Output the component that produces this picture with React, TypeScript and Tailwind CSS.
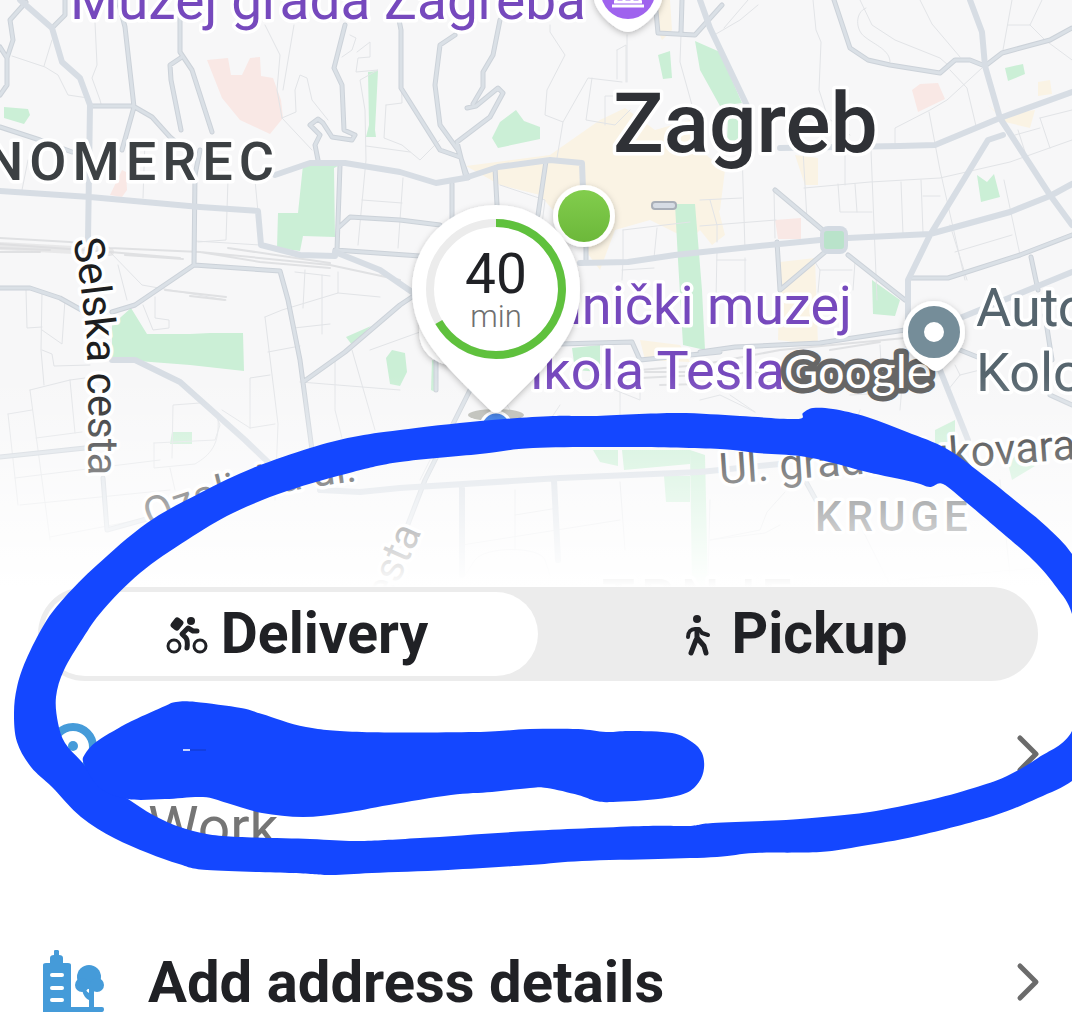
import { useState } from 'react'
import type { ReactNode } from 'react'
import clsx from 'clsx'

type Mode = 'delivery' | 'pickup'

type Point = [number, number]

// closed smooth outline through a list of points
const smoothOutline = (points: Point[]) => {
  const n = points.length
  const at = (i: number) => points[(i + n) % n]
  let d = `M${points[0][0]} ${points[0][1]}`

  for (let i = 0; i < n; i++) {
    const [p0, p1, p2, p3] = [at(i - 1), at(i), at(i + 1), at(i + 2)]
    const c1 = [p1[0] + (p2[0] - p0[0]) / 6, p1[1] + (p2[1] - p0[1]) / 6]
    const c2 = [p2[0] - (p3[0] - p1[0]) / 6, p2[1] - (p3[1] - p1[1]) / 6]
    d += `C${c1[0]} ${c1[1]} ${c2[0]} ${c2[1]} ${p2[0]} ${p2[1]}`
  }
  return `${d}Z`
}

const LOOP_OUTER: Point[] = [
  [14, 713], [17, 687], [26, 660], [45, 623], [65, 597], [97, 565], [147, 523], [200, 493],
  [253, 468], [310, 448], [353, 437], [400, 430], [480, 421], [553, 416], [593, 416], [677, 413],
  [740, 416], [797, 419], [803, 413], [813, 408], [833, 409], [867, 417], [907, 432], [947, 449],
  [987, 478], [1017, 502], [1047, 527], [1072, 554], [1098, 600], [1110, 680], [1096, 756],
  [1072, 781], [1038, 798], [993, 816], [917, 836], [862, 846], [820, 852], [755, 853],
  [717, 857], [658, 859], [582, 861], [530, 865], [448, 870], [372, 873], [331, 875], [293, 873],
  [207, 870], [179, 864], [148, 853], [114, 838], [81, 817], [52, 787], [31, 767], [17, 742],
]

const LOOP_INNER: Point[] = [
  [56, 697], [64, 670], [83, 638], [103, 610], [140, 573], [187, 540], [233, 513], [287, 491],
  [353, 472], [400, 462], [480, 454], [533, 448], [627, 447], [720, 449], [757, 453], [800, 456],
  [833, 463], [867, 472], [913, 482], [930, 487], [943, 484], [967, 503], [993, 525], [1033, 560],
  [1057, 588], [1072, 614], [1082, 670], [1072, 731], [1038, 758], [1007, 776], [983, 785],
  [938, 798], [876, 811], [834, 816], [786, 820], [713, 823], [689, 826], [644, 826], [530, 831],
  [420, 838], [358, 841], [310, 839], [223, 836], [183, 828], [153, 815], [128, 799], [100, 782],
  [81, 761], [65, 743], [58, 723],
]

const BLOB: Point[] = [
  [84, 764], [85, 754], [96, 742], [117, 729], [134, 720], [165, 706], [176, 702], [196, 702],
  [241, 708], [262, 714], [306, 727], [362, 732], [475, 732], [530, 729], [578, 729], [606, 732],
  [630, 731], [672, 733], [692, 742], [702, 753], [704, 768], [699, 782], [686, 793], [658, 799],
  [613, 802], [596, 801], [578, 795], [547, 788], [530, 788], [492, 792], [451, 795], [389, 805],
  [344, 813], [303, 817], [262, 813], [227, 803], [203, 797], [165, 799], [128, 799], [100, 788],
]

const WIDE_ROADS = [
  'M20 0L52 28L62 62L80 78L90 105L88 240',
  'M0 191L90 197L200 207L258 211L261 245L300 255L335 256',
  'M275 175L310 163L345 163L400 172L436 183L465 178L498 167L550 160L582 163L583 190',
  'M580 263L628 262L675 255L750 247L820 240',
  'M848 238L930 234L1010 212L1050 196L1072 184',
  'M908 320V280L930 235L988 140L1003 135',
  'M970 0L982 32L985 66L1000 118L1050 195L1072 225',
  'M780 148L900 146L935 145L1000 118L1072 92',
  'M700 0L710 28L750 112',
  'M335 252L380 270L412 292',
  'M940 370L968 440',
  'M112 360L135 360L180 382L245 440L272 466',
  'M960 318L1072 272',
  'M320 490L360 492L400 488L560 478L700 472L780 464',
  'M462 488V575',
  'M554 480L558 560',
]

const ROADS = [
  'M0 95L7 85V58L0 47',
  'M26 2L10 20L13 40L7 58',
  'M65 0V15L52 28',
  'M118 0L125 27L134 107L122 150',
  'M90 106H133L152 117L170 137L188 152',
  'M180 0V52L192 70L212 132',
  'M182 57L170 65L171 80L181 130',
  'M0 127L40 140L72 152',
  'M200 150L195 175L194 265L280 271L288 300L300 360L312 450',
  'M194 265L135 305L112 312',
  'M0 288H30L60 298L85 312',
  'M318 160L315 145L320 135L310 125L318 119L323 123L332 137L352 140L355 135L344 130L342 85L334 68L345 25',
  'M340 165L337 250',
  'M338 228L350 217L400 220L440 225',
  'M335 250L420 256',
  'M395 0L401 30V88L440 150L460 157',
  'M455 35L440 45L435 85L440 125L458 150L468 178',
  'M500 20L493 55L483 72V87L473 104',
  'M467 108L476 106L498 88L503 93L490 117L457 142L466 178',
  'M452 184V225',
  'M495 168L497 205',
  'M546 161L538 215',
  'M655 0L658 33L695 35L722 5',
  'M682 0L681 33',
  'M586 245V262',
  'M834 0L850 48L868 60L890 65L940 73L955 60L970 60L985 66L1002 53L1050 40L1072 28',
  'M777 242L780 290',
  'M775 190L825 232',
  'M848 255L905 300',
  'M825 252L780 290',
  'M910 278H948L1020 255L1072 235',
  'M1031 257L1038 290',
  'M700 352L735 347L820 343L905 330',
  'M1045 315L1052 360',
  'M1050 395L1072 405',
  'M0 457L85 448',
  'M103 478L107 530L150 518',
  'M303 382L345 352L400 305L430 285',
  'M436 360V390',
  'M470 390L425 480L400 545',
  'M560 344L632 342L640 360L720 352',
  'M960 350L985 360',
  'M805 480L816 500',
]

const LANES = [
  'M95 22L97 65L92 78L100 100L101 104',
  'M52 40L44 66',
  'M12 56L45 67L58 75L68 95L88 98',
  'M28 160L22 190',
  'M265 25L280 55L277 90L282 118L312 150',
  'M294 25L283 90',
  'M282 118L296 112L295 90L300 75L307 78L312 100L328 120',
  'M145 140L143 198',
  'M228 180L226 240L198 242',
  'M255 180L258 212',
  'M350 35L356 38L352 50L342 57',
  'M357 52L370 42V57L358 58L356 72L378 70L360 80L365 110L366 160L358 245',
  'M386 105L402 103L400 22',
  'M386 105L384 138L402 145L420 160L440 140',
  'M366 146L410 152',
  'M403 178L398 248',
  'M362 200L402 203',
  'M500 185L545 200L540 240',
  'M550 25V32L565 55L547 90L545 115L563 122L588 78L622 82',
  'M563 122L557 158',
  'M617 50L626 45V82M627 35V82M617 50V79',
  'M592 78L586 120L615 125L630 110M605 125V96H622',
  'M681 35L680 62L692 105',
  'M724 28L748 0M716 34L740 20L758 5',
  'M813 0L816 30L821 42L819 90L828 118L850 135',
  'M860 0L872 25L895 40L940 58L948 65',
  'M866 8C855 12 855 30 865 37C875 45 890 50 890 62',
  'M920 0L932 24L960 57',
  'M1012 0L1003 50M1008 25H1030L1042 0M1030 25L1045 40L1072 60',
  'M895 145V128L930 110L947 100L982 68',
  'M950 70L967 88L976 126M929 112L940 170L965 280',
  'M804 188L870 182L940 178L1010 162L1072 140',
  'M803 150L807 220M845 150V185M871 150L877 300',
  'M838 184L840 212H872M855 184L857 212M901 182L903 234M921 180L923 232M923 196H940',
  'M774 190L775 238M742 150L745 250M700 200L742 198M700 226L776 220',
  'M717 250L716 300M745 258V292M717 260H746',
  'M1018 130L1025 152M1015 135L1040 128M1040 118L1050 148M1040 118L1072 110',
  'M1004 180L1020 255M955 252L1012 235M950 225L967 280',
  'M820 270H852M815 262L820 270L818 292M855 262L853 290',
  'M623 230V260L622 280M623 230L690 222M657 228L654 258M622 270L654 268',
  'M710 200L717 225V242',
  'M195 241L260 245M26 290L27 328L42 327M42 292L41 350L44 385M65 300L62 344L42 330',
  'M42 350L52 354L54 366L90 365M118 265L127 300M155 297L155 318L169 320V328L153 330L143 305',
  'M108 250L142 285L170 290L226 300',
  'M30 390L70 380L85 378M30 390L42 480L50 540M8 414L32 410M8 414L18 505M70 380L75 433M36 438L82 432',
  'M172 458L173 405L200 403M154 443L215 440L220 425L217 418M154 443V468L195 464C210 455 220 445 218 418',
  'M265 317L282 310L338 293V272M265 317L278 424L275 500M268 352L300 346M250 428V378L270 375',
  'M305 270L303 308M322 275V334M294 328L330 324M295 272L330 276M338 293L380 297',
  'M300 382L400 390M335 360V410L342 438M352 350L375 430M250 428L275 424M222 410L250 428',
  'M420 332L370 350M15 478L160 460M20 505L170 490M50 537L180 512M170 468L175 490',
  'M500 392L510 410M590 380L640 400L640 392M560 405L550 420M620 392V420',
  'M700 400L720 395L755 412M730 395L755 412M880 345L882 380',
  'M948 390L960 375L1000 365M960 375L955 365M905 350L900 410M850 395L905 392',
  'M710 540L765 533L780 525M710 500L708 580M710 540L760 530L767 512L785 492',
  'M430 460L420 480M515 490V550M515 515L558 508M462 545L620 520M620 482L625 550',
  'M1000 480L1010 575M850 440L860 410M900 580L1072 565M855 515L890 585',
  'M465 575L475 560C485 546 540 546 545 560L550 575',
]

const RAILS = [
  'M0 238L70 242L110 248L200 252L330 265L400 280',
  'M0 244L110 252L180 258M0 248L50 250M0 252L40 252',
  'M200 252L260 262L330 268M228 248L330 263',
  'M125 255L183 259M165 290L226 297M190 296L225 300',
  'M640 370L700 365L780 350L905 338',
  'M640 378L760 372L800 360M660 385L780 382',
  'M645 372L690 372M830 350L880 342',
]

const PARKS = [
  'M4 107L28 109L30 115L24 124L4 118Z',
  'M368 72L378 71L375 130L376 137H366L369 125Z',
  'M303 165L342 164L334 168L335 237L303 236L300 251L277 248L278 213L298 213Z',
  'M516 110L524 121L540 127V139L498 148L492 138L500 122Z',
  'M695 41L720 52L742 103L720 106L700 70Z',
  'M658 55L670 51L672 78L663 79Z',
  'M728 118L740 118L738 142L727 140Z',
  'M675 204H695L702 290L705 350L683 345L678 260Z',
  'M872 280L900 300L895 316L873 314Z',
  'M977 175L987 182L994 174L1000 197L981 202Z',
  'M1005 68L1023 64L1025 74L1008 81Z',
  'M131 308L147 334H190L210 333H243L244 371L190 365L112 359V325Z',
  'M346 337L371 326L352 345Z',
  'M172 432H192V444H170Z',
  'M386 358L392 350L405 353L407 372L400 386L390 384Z',
  'M572 348L600 345V372L575 370Z',
  'M593 450H618V466L600 462Z',
  'M622 450H690V464L624 470Z',
  'M664 476H690V502H666Z',
  'M935 430L955 420V440L935 445Z',
  'M1008 464L1016 455L1035 466L1012 480Z',
  'M690 450L705 455L708 590H692Z',
  'M432 360L438 362L435 392L431 390Z',
]

const BUILT_UP = [
  'M466 166L550 155L600 120L625 108L655 130L690 120L700 150L725 170L720 210L690 240L650 220L615 230L600 270L570 230L540 195L500 185Z',
  'M653 0H670L672 30L662 40L655 25Z',
  'M795 155L818 158V185H805Z',
  'M700 190L715 195L725 235L712 245L700 230Z',
  'M780 262L815 258L818 345L778 340Z',
  'M988 105L1000 115L1035 110L1030 128L1005 122Z',
  'M1038 82L1050 80L1052 94L1038 96Z',
  'M640 340L680 345L690 362L645 360Z',
]

const HOSPITALS = [
  'M207 60L228 58L231 75H242L250 58L260 57L261 76L273 78L281 100L283 118L270 134L240 120L222 98Z',
  'M122 170L126 172L127 190L122 197L110 195Z',
  'M912 90L920 84L938 83L945 99L918 112Z',
  'M775 220L801 218V239L778 239Z',
]

const HALO = {
  stroke: '#ffffff',
  strokeWidth: 7,
  strokeLinejoin: 'round',
  paintOrder: 'stroke',
} as const

function CityMap() {
  return (
    <svg
      viewBox="0 0 1072 587"
      preserveAspectRatio="xMidYMin slice"
      className="block h-[587px] w-full font-[Roboto,sans-serif]"
      role="img"
      aria-label="Map of Zagreb"
    >
      <defs>
        <linearGradient id="fade" x1="0" y1="375" x2="0" y2="587" gradientUnits="userSpaceOnUse">
          <stop offset="0" stopColor="#fff" stopOpacity="0" />
          <stop offset="1" stopColor="#fff" stopOpacity="1" />
        </linearGradient>
        <linearGradient id="dot" x1="0" y1="0" x2="0" y2="1">
          <stop offset="0" stopColor="#82cd4d" />
          <stop offset="1" stopColor="#6cb83a" />
        </linearGradient>
        <filter id="shadow" x="-30%" y="-30%" width="160%" height="160%">
          <feDropShadow dx="0" dy="2" stdDeviation="3" floodOpacity="0.25" />
        </filter>
        <path id="selska" d="M73 240L80 280L87 340L88 400L88 500" />
        <path id="ozaljska" d="M151 530C194 508 274 490 384 478" />
      </defs>

      <rect width="1072" height="587" fill="#f7f7f8" />

      <path d={BUILT_UP.join('')} fill="#faf3e4" />
      <path d={HOSPITALS.join('')} fill="#f9e8e5" />
      <path d={PARKS.join('')} fill="#cbefd6" />

      <g fill="none" strokeLinejoin="round" strokeLinecap="round">
        <path d={LANES.join('')} stroke="#e2e4e7" strokeWidth="1" />
        <path d={RAILS.join('')} stroke="#e0e1e3" strokeWidth="2" />
        <path d="M0 246L110 252" stroke="#dddee0" strokeWidth="8" opacity="0.6" />
        <path d={ROADS.join('')} stroke="#ccd2d9" strokeWidth="5" />
        <path d={ROADS.join('')} stroke="#dae0e6" strokeWidth="3" />
        <path d={WIDE_ROADS.join('')} stroke="#d7dde4" strokeWidth="6" />
      </g>
      <rect x="820" y="226" width="28" height="28" rx="8" fill="#d3dae2" />
      <rect x="824" y="231" width="20" height="18" rx="3" fill="#b9e3ca" />
      <rect x="652" y="202" width="24" height="7" rx="3" fill="#d6dce4" stroke="#a9afb8" strokeWidth="2" />

      <g {...HALO}>
        <text x="613" y="152" fontSize="84" fontWeight="500" fill="#2f3136">Zagreb</text>
        <text x="-15" y="180" fontSize="54" fontWeight="500" fill="#3c4043" className="tracking-[6px]">
          NOMEREC
        </text>
        <g fontSize="54" fill="#7649bd">
          <text x="70" y="19" fontSize="55">Muzej grada Zagreba</text>
          <text x="852" y="324" textAnchor="end">hnički muzej</text>
          <text x="785" y="389" textAnchor="end">ikola Tesla</text>
        </g>
        <g fontSize="54" fill="#56656e">
          <text x="976" y="326">Autobusni</text>
          <text x="976" y="391">Kolodvor</text>
        </g>
        <g fontSize="42" fill="#1d1e20">
          <text>
            <textPath href="#selska">Selska cesta</textPath>
          </text>
          <text>
            <textPath href="#ozaljska">Ozaljska ul.</textPath>
          </text>
          <text transform="translate(720 484) rotate(-4)" fontSize="43">Ul. grada Vukovara</text>
          <text transform="translate(380 625) rotate(-66)">cesta</text>
        </g>
        <g fontWeight="500" fill="#3c4043">
          <text x="815" y="531" fontSize="42" className="tracking-[5px]">KRUGE</text>
          <text x="602" y="617" fontSize="54" className="tracking-[6px]">TRNJE</text>
        </g>
      </g>

      <rect y="375" width="1072" height="212" fill="url(#fade)" />

      <text
        x="784"
        y="388"
        fontSize="47"
        fill="#ffffff"
        stroke="#666666"
        strokeWidth="11"
        strokeLinejoin="round"
        paintOrder="stroke"
        className="font-[Lato,sans-serif]"
      >
        Google
      </text>

      {/* museum */}
      <g>
        <path
          d="M628 -42A34 34 0 0 1 660 6C655 17 638 32 628 32C618 32 601 17 596 6A34 34 0 0 1 628 -42Z"
          fill="#fff"
          filter="url(#shadow)"
        />
        <circle cx="628" cy="-8" r="27" fill="#9f63ee" />
        <path d="M612 6H644M616 2V-8M624 2V-8M632 2V-8M640 2V-8M614 2H642" stroke="#fff" strokeWidth="3" />
      </g>

      {/* bus station */}
      <g>
        <path
          d="M934 301A31 31 0 0 1 965 333C965 346 955 357 945 366Q936 376 927 366C914 358 903 348 903 333A31 31 0 0 1 934 301Z"
          fill="#fff"
          filter="url(#shadow)"
        />
        <circle cx="934" cy="332" r="18" fill="none" stroke="#758d99" strokeWidth="16" />
      </g>

      {/* restaurant */}
      <circle cx="584" cy="216" r="31" fill="#fff" filter="url(#shadow)" />
      <circle cx="584" cy="216" r="26" fill="url(#dot)" />

      {/* courier estimate */}
      <ellipse cx="496" cy="415" rx="28" ry="6" fill="#c4c5bf" />
      <circle cx="496" cy="427" r="15" fill="#4a86e8" stroke="#fff" strokeWidth="3" />
      <circle cx="452" cy="332" r="33" fill="#fff" filter="url(#shadow)" />
      <path
        d="M496 205A84 84 0 0 1 580 289C580 335 552 360 504 408Q496 417 488 408C440 360 412 335 412 289A84 84 0 0 1 496 205Z"
        fill="#fff"
        filter="url(#shadow)"
      />
      <circle cx="496" cy="289" r="66" fill="none" stroke="#ececec" strokeWidth="8" />
      <path d="M496 223A66 66 0 1 1 438.8 322" fill="none" stroke="#5fc13d" strokeWidth="8" />
      <text x="496" y="293" textAnchor="middle" fontSize="55" fill="#202125">40</text>
      <text x="496" y="327" textAnchor="middle" fontSize="31" fontWeight="300" fill="#6f6f6f">min</text>
    </svg>
  )
}

function BikeIcon() {
  return (
    <svg viewBox="0 0 60 60" className="size-[60px]" fill="none" stroke="currentColor" aria-hidden="true">
      <circle cx="17" cy="42" r="6" strokeWidth="3" />
      <circle cx="43" cy="42" r="6" strokeWidth="3" />
      <circle cx="34" cy="17" r="4" fill="currentColor" stroke="none" />
      <rect x="15" y="14" width="10" height="12" rx="3" transform="rotate(38 20 20)" fill="currentColor" stroke="none" />
      <path d="M40 27H36L31 24L25 30L29 34Q31 37 30 44" strokeWidth="5" strokeLinecap="round" strokeLinejoin="round" />
    </svg>
  )
}

function WalkIcon() {
  return (
    <svg viewBox="0 0 60 60" className="size-[60px]" fill="none" stroke="currentColor" aria-hidden="true">
      <circle cx="29" cy="15" r="4" fill="currentColor" stroke="none" />
      <g strokeWidth="5" strokeLinecap="round" strokeLinejoin="round">
        <path d="M20 33C20 28 23 25 27 25H31L34 29L40 31" strokeWidth="4" />
        <path d="M29 26V36" />
        <path d="M28 36L23 49M30 35L36 42L38 49" />
      </g>
    </svg>
  )
}

function PlaceIcon() {
  return (
    <svg viewBox="0 0 64 64" className="size-16 text-[#459bd9]" aria-hidden="true">
      <path
        d="M31 5A20 20 0 0 1 51 25C51 38 38 50 31 58C24 50 11 38 11 25A20 20 0 0 1 31 5Z"
        fill="none"
        stroke="currentColor"
        strokeWidth="8"
      />
      <circle cx="31" cy="24" r="5" fill="currentColor" />
    </svg>
  )
}

function BuildingIcon() {
  return (
    <svg viewBox="0 2 64 64" className="size-16 text-[#459bd9]" fill="currentColor" aria-hidden="true">
      <path d="M1 17Q1 15 4 15H8V10Q8 7 12 7V3Q14 -1 17 3V7Q21 7 21 10V15H26Q29 15 29 17V59H60Q62 59 62 61Q62 64 60 64H1Z" />
      <path d="M10 27H20M10 40H20M10 52H20" stroke="#fff" strokeWidth="4" strokeLinecap="round" />
      <circle cx="47" cy="29" r="12" />
      <circle cx="40" cy="37" r="7" />
      <circle cx="55" cy="37" r="7" />
      <path d="M47 36H52V60H47V52Q42 50 40 42H44Q45 44 47 45Z" />
    </svg>
  )
}

function Chevron() {
  return (
    <svg viewBox="0 0 24 40" className="h-10 w-6 text-[#6b6b6b]" fill="none" stroke="currentColor" aria-hidden="true">
      <path d="M4 4L20 20L4 36" strokeWidth="5" strokeLinecap="round" strokeLinejoin="round" />
    </svg>
  )
}

type ModeButtonProps = {
  active: boolean
  icon: ReactNode
  label: string
  onClick: () => void
}

function ModeButton({ active, icon, label, onClick }: ModeButtonProps) {
  return (
    <button
      type="button"
      aria-pressed={active}
      onClick={onClick}
      className={clsx(
        'flex flex-1 items-center justify-center gap-1 rounded-full pl-1 text-[57px] leading-[84px] font-bold',
        active && 'bg-white',
      )}
    >
      {icon}
      <span>{label}</span>
    </button>
  )
}

function Markup() {
  return (
    <svg
      viewBox="0 0 1072 1024"
      preserveAspectRatio="none"
      className="pointer-events-none absolute top-0 left-0 h-[1024px] w-full"
      fill="#1447ff"
      aria-hidden="true"
    >
      <path d={smoothOutline(LOOP_OUTER) + smoothOutline(LOOP_INNER)} fillRule="evenodd" />
      <path d={smoothOutline(BLOB)} />
      <path d="M183 750H190" stroke="#c7d3ff" strokeWidth="2" />
      <path d="M190 750H206" stroke="#1238c4" strokeWidth="1" />
    </svg>
  )
}

export default function App() {
  const [mode, setMode] = useState<Mode>('delivery')

  return (
    <main className="relative min-h-screen overflow-hidden bg-white font-[Roboto,sans-serif] text-[#202125]">
      <CityMap />

      <div className="mr-[34px] ml-[38px] flex rounded-full bg-[#ececec] p-[5px]">
        <ModeButton
          active={mode === 'delivery'}
          icon={<BikeIcon />}
          label="Delivery"
          onClick={() => setMode('delivery')}
        />
        <ModeButton
          active={mode === 'pickup'}
          icon={<WalkIcon />}
          label="Pickup"
          onClick={() => setMode('pickup')}
        />
      </div>

      <div className="mt-9 flex flex-col gap-20 pr-8 pl-[42px]">
        <button type="button" className="flex w-full items-start text-left">
          <span className="flex h-[74px] items-center">
            <PlaceIcon />
          </span>
          <span className="ml-[42px] flex-1 pt-[74px] text-[57px] leading-[74px] text-[#757575]">Work</span>
          <span className="flex h-[74px] items-center">
            <Chevron />
          </span>
        </button>

        <button type="button" className="flex w-full items-center text-left">
          <BuildingIcon />
          <span className="ml-[42px] flex-1 text-[58px] leading-[74px] font-bold">Add address details</span>
          <Chevron />
        </button>
      </div>

      <Markup />
    </main>
  )
}
